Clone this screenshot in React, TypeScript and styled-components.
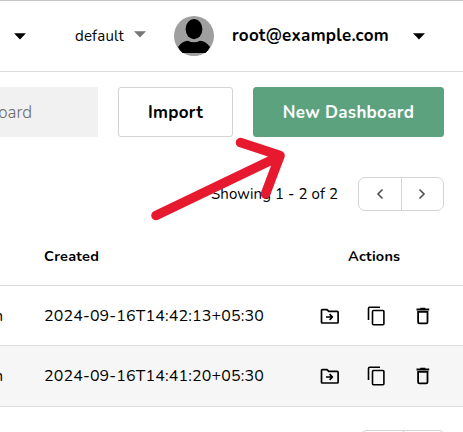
import React from "react";
import styled, { createGlobalStyle } from "styled-components";

const GlobalStyle = createGlobalStyle`
  *, *::before, *::after { box-sizing: border-box; }
  html, body { margin: 0; padding: 0; overflow: hidden; background: #fff; }
  body { font-family: Nunito, "Open Sans", "Noto Sans", sans-serif; color: #000; }
  button { font-family: inherit; color: inherit; padding: 0; margin: 0; background: none; border: 0; }
`;

const Page = styled.div`
  position: relative;
  width: 463px;
  height: 432px;
  overflow: hidden;
  background: #fff;
`;

const Header = styled.header`
  display: flex;
  align-items: center;
  height: 72px;
  padding-left: 14px;
  border-top: 1px solid #c2c6c9;
  border-bottom: 1px solid #dcdcdc;
`;

const Caret = styled.svg<{ $left?: number; $lift?: number }>`
  display: block;
  flex: none;
  width: 12px;
  height: 7px;
  margin-left: ${(p) => p.$left ?? 0}px;
  margin-bottom: ${(p) => p.$lift ?? 0}px;
`;

const Label = styled.span<{ $size: number; $weight?: number; $track?: number; $width?: number }>`
  display: block;
  flex: none;
  width: ${(p) => (p.$width ? `${p.$width}px` : "auto")};
  font-size: ${(p) => p.$size}px;
  font-weight: ${(p) => p.$weight ?? 400};
  letter-spacing: ${(p) => p.$track ?? 0}px;
  line-height: 24px;
  white-space: nowrap;
`;

const Organization = styled.div`
  display: flex;
  align-items: center;
  margin-left: 49px;
`;

const Avatar = styled.svg`
  display: block;
  flex: none;
  width: 40px;
  height: 40px;
  margin: 0 18px 0 28px;
`;

const Toolbar = styled.div`
  display: flex;
  height: 50px;
  margin-top: 15px;
`;

const Search = styled.div`
  display: flex;
  align-items: center;
  justify-content: flex-end;
  width: 98px;
  padding: 2px 66px 0 0;
  overflow: hidden;
  background: #f1f1f1;
  color: #6c6c6c;
`;

const ActionButton = styled.button<{ $primary?: boolean }>`
  display: flex;
  align-items: center;
  justify-content: center;
  width: ${(p) => (p.$primary ? 191 : 115)}px;
  height: 50px;
  margin-left: 20px;
  padding-top: 1px;
  border: 1px solid ${(p) => (p.$primary ? "#5ca27f" : "#d3d3d5")};
  border-radius: 3px;
  background: ${(p) => (p.$primary ? "#5ca27f" : "#fff")};
  color: ${(p) => (p.$primary ? "#fff" : "#000")};
`;

const PagerRow = styled.div`
  display: flex;
  align-items: center;
  height: 34px;
  margin-top: 40px;
  padding-left: 211px;
`;

const Pager = styled.div`
  display: flex;
  flex: none;
  width: 86px;
  height: 34px;
  border: 1px solid #d4d4d4;
  border-radius: 7px;
`;

const PageButton = styled.button`
  display: flex;
  align-items: center;
  justify-content: center;
  flex: 1;
  & + & { border-left: 1px solid #d4d4d4; }
`;

const Table = styled.div`
  margin-top: 15px;
`;

const Row = styled.div<{ $height: number; $shaded?: boolean }>`
  display: grid;
  grid-template-columns: 44px 274px 1fr;
  align-items: center;
  height: ${(p) => p.$height}px;
  border-bottom: 1px solid #dcdcdc;
  background: ${(p) => (p.$shaded ? "#f6f6f6" : "#fff")};
`;

const ClippedCell = styled.div`
  display: flex;
  justify-content: flex-end;
  width: 3px;
  overflow: hidden;
`;

const Actions = styled.div`
  display: flex;
  align-items: center;
  gap: 24px;
`;

const ActionsTitle = styled.div`
  padding-left: 30px;
`;

const Icon = styled.svg`
  display: block;
  flex: none;
  width: 24px;
  height: 24px;
`;

const BottomPager = styled.div`
  display: flex;
  margin: 23px 0 0 360px;
`;

const Arrow = styled.svg`
  position: absolute;
  left: 145px;
  top: 130px;
  width: 150px;
  height: 100px;
  pointer-events: none;
`;

function Triangle({ color = "#000", left, lift }: { color?: string; left?: number; lift?: number }) {
  return (
    <Caret viewBox="0 0 12 7" $left={left} $lift={lift}>
      <path d="M0 .3H12L6 6.5Z" fill={color} />
    </Caret>
  );
}

function Chevron({ next }: { next?: boolean }) {
  return (
    <svg width="8" height="12" viewBox="0 0 8 12" fill="none" stroke="#505050" strokeWidth="1.6">
      <path d={next ? "M1.5 1.5 6 6l-4.5 4.5" : "M6.5 1.5 2 6l4.5 4.5"} />
    </svg>
  );
}

function PageControls() {
  return (
    <Pager>
      <PageButton aria-label="Previous page"><Chevron /></PageButton>
      <PageButton aria-label="Next page"><Chevron next /></PageButton>
    </Pager>
  );
}

function RowActions() {
  return (
    <Actions>
      <Icon viewBox="0 0 24 24" fill="none" stroke="#000" strokeWidth="1.7" strokeLinejoin="round">
        <path d="M3.5 18.2V6.3Q3.5 5.6 4.2 5.6H9l1.7 1.8h8.6q.8 0 .8.8v10q0 .8-.8.8h-15q-.8 0-.8-.8Z" />
        <path d="M8 13h6.2M11.6 10.2l2.8 2.8-2.8 2.8" />
      </Icon>
      <Icon viewBox="0 0 24 24" fill="none" stroke="#000" strokeWidth="1.6">
        <path d="M2.5 16V4.5q0-1.2 1.2-1.2H14" />
        <rect x="6.5" y="6.5" width="11.4" height="14.2" rx="1" />
      </Icon>
      <Icon viewBox="0 0 24 24" fill="none" stroke="#000" strokeWidth="1.8">
        <path d="M2.5 5.5h12.7M6.3 4.6h5" />
        <path d="M4.1 7.8h9.4v10.3q0 1.3-1.3 1.3H5.4q-1.3 0-1.3-1.3Z" />
      </Icon>
    </Actions>
  );
}

const records = ["2024-09-16T14:42:13+05:30", "2024-09-16T14:41:20+05:30"];

export default function App() {
  return (
    <>
      <GlobalStyle />
      <Page>
        <Header>
          <Triangle />
          <Organization>
            <Label $size={15} $track={0.2} $width={50}>default</Label>
            <Triangle color="#777" left={9} lift={4} />
          </Organization>
          <Avatar viewBox="0 0 40 40">
            <circle cx="20" cy="20" r="20" fill="#9f9f9f" />
            <ellipse cx="20" cy="13.1" rx="8.4" ry="10.1" />
            <path d="M4 31Q8 25 14 24.7 20 28 26 24.7 32 25 36 31 34.5 34.5 31.5 37h-23Q5.5 34.5 4 31Z" />
          </Avatar>
          <Label $size={17} $weight={700} $track={0.28} $width={157}>root@example.com</Label>
          <Triangle left={24} />
        </Header>

        <Toolbar>
          <Search><Label $size={17} $weight={300}>Search Dashboard</Label></Search>
          <ActionButton><Label $size={17} $weight={700} $track={0.3}>Import</Label></ActionButton>
          <ActionButton $primary><Label $size={17} $weight={700} $track={0.3}>New Dashboard</Label></ActionButton>
        </Toolbar>

        <PagerRow>
          <Label $size={15} $track={0.1} $width={147}>Showing 1 - 2 of 2</Label>
          <PageControls />
        </PagerRow>

        <Table>
          <Row $height={60}>
            <span />
            <Label $size={14.5} $weight={700} $track={0.28}>Created</Label>
            <ActionsTitle><Label $size={14.5} $weight={700} $track={0.2}>Actions</Label></ActionsTitle>
          </Row>
          {records.map((created, index) => (
            <Row key={created} $height={index ? 61 : 60} $shaded={index % 2 === 1}>
              <ClippedCell><Label $size={16}>Admin</Label></ClippedCell>
              <Label $size={16} $track={0.14}>{created}</Label>
              <RowActions />
            </Row>
          ))}
        </Table>
        <BottomPager><PageControls /></BottomPager>

        <Arrow viewBox="145 130 150 100" fill="none" stroke="#e6192e" strokeWidth="9.6" strokeLinecap="round" strokeLinejoin="round">
          <path d="M156 215.5 280 156M240.5 142.5l39.5 13-14.5 38.5" />
        </Arrow>
      </Page>
    </>
  );
}
